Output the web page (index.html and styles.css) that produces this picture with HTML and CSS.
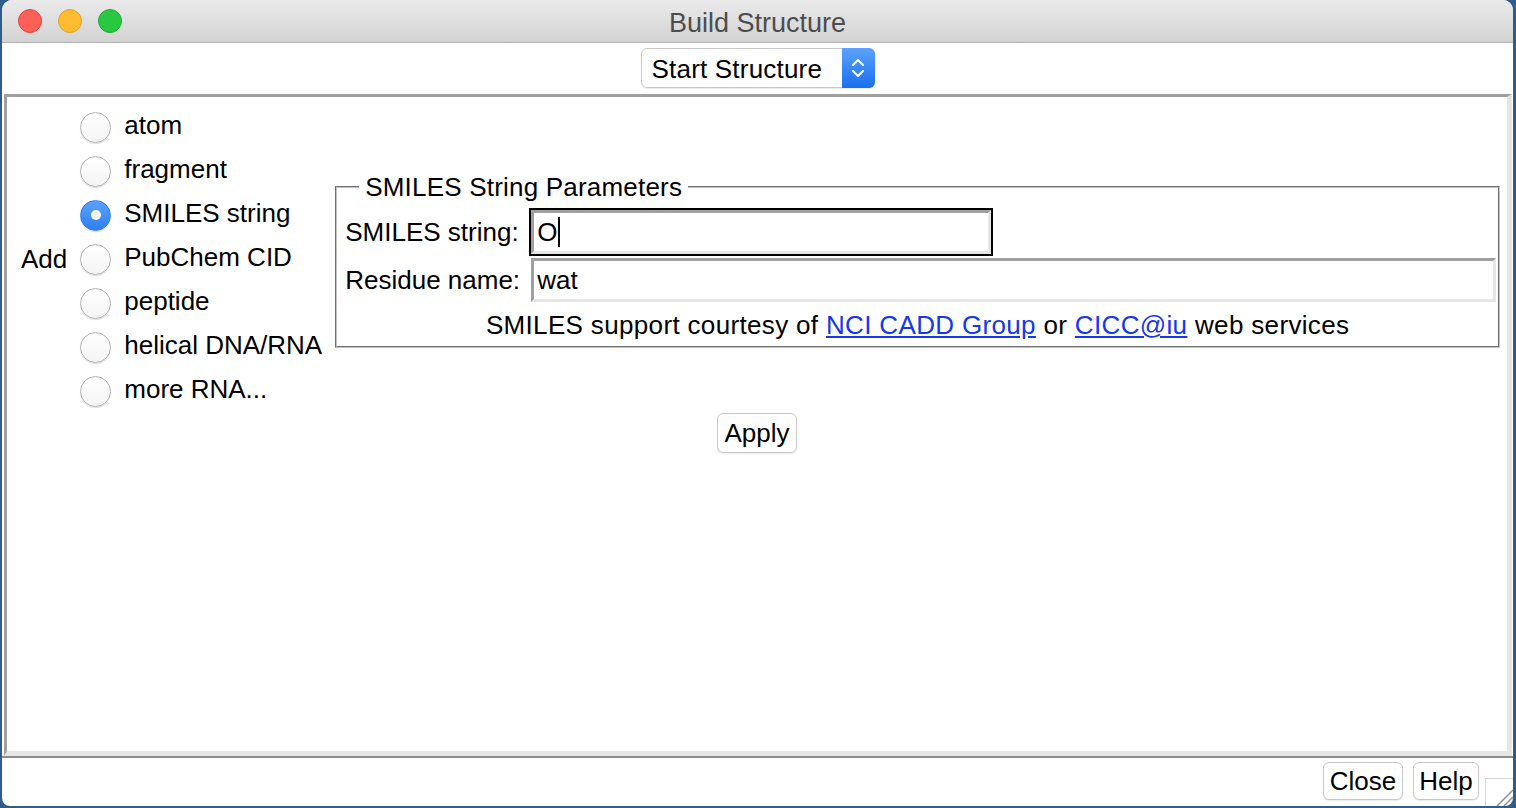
FILE: index.html
```html
<!DOCTYPE html>
<html lang="en">
<head>
    <meta charset="UTF-8">
    <meta name="viewport" content="width=device-width, initial-scale=1.0">
    <title>Build Structure</title>
    <link rel="stylesheet" href="styles.css">
</head>
<body>
    <div class="window">
        <div class="titlebar">
            <div class="lights">
                <span class="light red"></span>
                <span class="light yellow"></span>
                <span class="light green"></span>
            </div>
            <div class="title">Build Structure</div>
            <div></div>
        </div>

        <div class="toolbar">
            <div class="popup">
                <span class="popup-text">Start Structure</span>
                <span class="stepper">
                    <svg width="16" height="24" viewBox="0 0 16 24">
                        <path d="M3 9 L8 4 L13 9" fill="none" stroke="#fff" stroke-width="2" stroke-linecap="round" stroke-linejoin="round"/>
                        <path d="M3 15 L8 20 L13 15" fill="none" stroke="#fff" stroke-width="2" stroke-linecap="round" stroke-linejoin="round"/>
                    </svg>
                </span>
            </div>
        </div>

        <div class="main">
            <div class="top-row">
                <div class="add-group">
                    <span class="add-label">Add</span>
                    <div class="radio-list">
                        <label class="radio-row"><span class="radio"></span><span class="radio-text">atom</span></label>
                        <label class="radio-row"><span class="radio"></span><span class="radio-text">fragment</span></label>
                        <label class="radio-row"><span class="radio checked"></span><span class="radio-text">SMILES string</span></label>
                        <label class="radio-row"><span class="radio"></span><span class="radio-text">PubChem CID</span></label>
                        <label class="radio-row"><span class="radio"></span><span class="radio-text">peptide</span></label>
                        <label class="radio-row"><span class="radio"></span><span class="radio-text">helical DNA/RNA</span></label>
                        <label class="radio-row"><span class="radio"></span><span class="radio-text">more RNA...</span></label>
                    </div>
                </div>

                <fieldset class="params">
                    <legend>SMILES String Parameters</legend>
                    <div class="param-grid">
                        <span class="param-label">SMILES string:</span>
                        <div class="entry-wrap focused short">
                            <div class="entry">O<span class="caret"></span></div>
                        </div>
                        <span class="param-label">Residue name:</span>
                        <div class="entry-wrap">
                            <div class="entry">wat</div>
                        </div>
                        <div class="courtesy">SMILES support courtesy of <a href="#">NCI CADD Group</a> or <a href="#">CICC@iu</a> web services</div>
                    </div>
                </fieldset>
            </div>

            <div class="apply-row">
                <button class="btn apply">Apply</button>
            </div>
        </div>

        <div class="separator"></div>

        <div class="bottom-bar">
            <button class="btn close">Close</button>
            <button class="btn help">Help</button>
            <div class="grip">
                <svg width="28" height="28" viewBox="0 0 28 28">
                    <line x1="27" y1="11" x2="11" y2="27" stroke="#8e8e8e" stroke-width="1.5"/>
                    <line x1="27" y1="18" x2="18" y2="27" stroke="#8e8e8e" stroke-width="1.5"/>
                </svg>
            </div>
        </div>
    </div>
</body>
</html>
```

FILE: styles.css
```css
body { margin: 0; padding: 0 3px 2px 2px; background: #2f5d8a; font-family: "Liberation Sans", Arial, sans-serif; font-size: 26px; color: #000; }
.window { height: 806px; background: #fff; border-radius: 10px 10px 8px 8px; display: flex; flex-direction: column; overflow: hidden; }

.titlebar { height: 42px; border-bottom: 1px solid #b1b1b1; background: linear-gradient(#eaeaea, #d3d3d3); display: grid; grid-template-columns: 1fr auto 1fr; align-items: center; }
.lights { display: flex; gap: 16px; padding-left: 16px; }
.light { width: 22px; height: 22px; border-radius: 50%; border: 1px solid; }
.red { background: #fe5f57; border-color: #e1463f; }
.yellow { background: #febc2e; border-color: #dfa125; }
.green { background: #28c840; border-color: #1dad2b; }
.title { font-size: 27px; color: #4d4d4d; padding-top: 4px; }

.toolbar { height: 51px; display: flex; justify-content: center; align-items: flex-start; padding-top: 5px; box-sizing: border-box; }
.popup { height: 40px; width: 234px; box-sizing: border-box; border: 1px solid #c9c9c9; border-radius: 6px; display: flex; box-shadow: 0 1px 1px rgba(0,0,0,0.08); }
.popup-text { flex: 1; padding: 1px 0 0 10px; line-height: 38px; letter-spacing: 0.2px; }
.stepper { width: 33px; margin: -1px -1px -1px 0; border-radius: 0 6px 6px 0; background: linear-gradient(#5ba3fb, #1a6ef0); display: flex; align-items: center; justify-content: center; }

.main { flex: 1; margin: 0 1px 0 2px; border-top: 3px solid #a0a0a0; border-left: 3px solid #a0a0a0; border-right: 5px solid #e6e6e6; border-bottom: 5px solid #e6e6e6; }
.top-row { display: flex; align-items: flex-start; padding: 8px 7px 0 14px; }
.add-group { display: flex; align-items: center; }
.add-label { margin-right: 13px; }
.radio-row { height: 44px; display: flex; align-items: center; gap: 13px; }
.radio-text { margin-top: -3px; }
.radio { width: 29px; height: 29px; border-radius: 50%; border: 1px solid #b3b3b3; background: linear-gradient(#fff, #f4f4f4); box-shadow: 0 1px 1px rgba(0,0,0,0.14); display: flex; align-items: center; justify-content: center; }
.radio.checked { background: linear-gradient(#5aa2fa, #2f7ff2); border-color: #2f7df0; }
.radio.checked::after { content: ""; width: 10px; height: 10px; border-radius: 50%; background: #fff; }

.params { flex: 1; margin: 67px 0 0 13px; padding: 0 0 4px 8px; border: 2px groove #c4c4c4; min-width: 0; }
.params legend { margin-left: 14px; padding: 0 6px; line-height: 30px; letter-spacing: 0.2px; }
.param-grid { display: grid; grid-template-columns: 184px 1fr; align-items: center; padding-top: 6px; }
.param-label { line-height: 30px; }
.entry-wrap { border: 2px solid transparent; height: 44px; }
.entry-wrap.focused { border-color: #000; }
.entry-wrap.short { width: 460px; }
.entry { height: 44px; box-sizing: border-box; border-top: 3px solid #a0a0a0; border-left: 3px solid #a0a0a0; border-bottom: 3px solid #e6e6e6; border-right: 3px solid #e6e6e6; padding-left: 3px; line-height: 38px; display: flex; align-items: center; }
.caret { width: 2px; height: 30px; background: #000; margin-left: 1px; }
.courtesy { grid-column: 1 / -1; text-align: center; line-height: 30px; padding: 6px 0 2px; margin-left: -8px; letter-spacing: 0.34px; }
.courtesy a { color: #1437f0; }

.apply-row { display: flex; justify-content: center; }
.btn { font-family: inherit; font-size: 26px; background: #fff; border: 1px solid #c9c9c9; border-radius: 6px; box-shadow: 0 1px 1px rgba(0,0,0,0.08); padding: 0; color: #000; }
.apply { width: 80px; height: 40px; }

.separator { height: 2px; background: #8d8d8d; }
.bottom-bar { height: 48px; display: flex; justify-content: flex-end; align-items: flex-start; }
.close { width: 80px; height: 38px; margin-top: 4px; }
.help { width: 66px; height: 38px; margin: 4px 6px 0 10px; }
.grip { width: 28px; height: 28px; margin-top: 20px; box-sizing: border-box; border-top: 1px solid #d8d8d8; border-left: 1px solid #d8d8d8; }
```
